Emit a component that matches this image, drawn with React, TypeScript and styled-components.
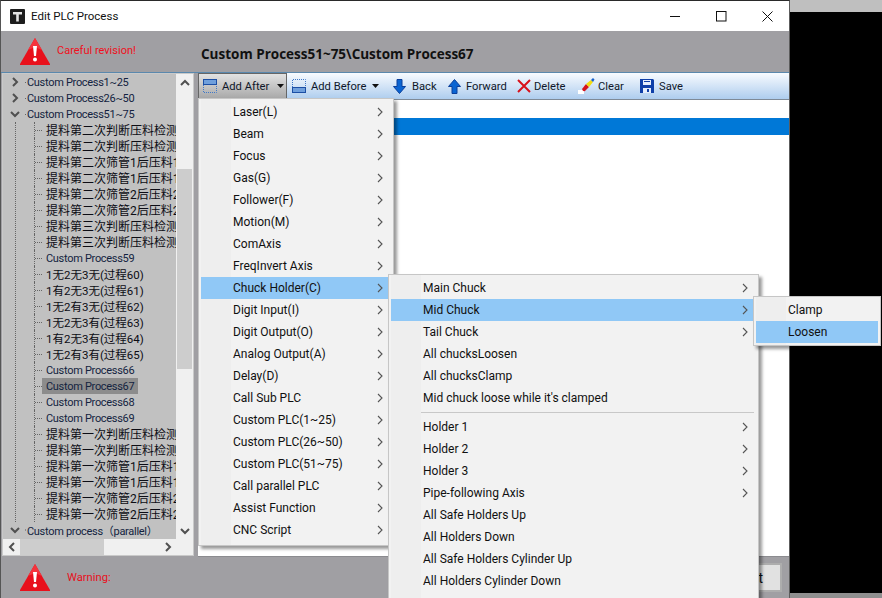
import React from "react";
import styled, { createGlobalStyle } from "styled-components";

const UI_FONT = `Roboto, "Noto Sans CJK SC", sans-serif`;

const GlobalStyle = createGlobalStyle`
  html, body {
    margin: 0;
    padding: 0;
    width: 882px;
    height: 598px;
    overflow: hidden;
    background: #000;
  }
  #root {
    width: 882px;
    height: 598px;
  }
`;

const firstGroup = ["Custom Process1~25", "Custom Process26~50"];

const childRows = [
  "提料第二次判断压料检测",
  "提料第二次判断压料检测",
  "提料第二次筛管1后压料1",
  "提料第二次筛管1后压料1",
  "提料第二次筛管2后压料2",
  "提料第二次筛管2后压料2",
  "提料第三次判断压料检测",
  "提料第三次判断压料检测",
  "Custom Process59",
  "1无2无3无(过程60)",
  "1有2无3无(过程61)",
  "1无2有3无(过程62)",
  "1无2无3有(过程63)",
  "1有2无3有(过程64)",
  "1无2有3有(过程65)",
  "Custom Process66",
  "Custom Process67",
  "Custom Process68",
  "Custom Process69",
  "提料第一次判断压料检测",
  "提料第一次判断压料检测",
  "提料第一次筛管1后压料1",
  "提料第一次筛管1后压料1",
  "提料第一次筛管2后压料2",
  "提料第一次筛管2后压料2",
];

const mainMenu = [
  "Laser(L)",
  "Beam",
  "Focus",
  "Gas(G)",
  "Follower(F)",
  "Motion(M)",
  "ComAxis",
  "FreqInvert Axis",
  "Chuck Holder(C)",
  "Digit Input(I)",
  "Digit Output(O)",
  "Analog Output(A)",
  "Delay(D)",
  "Call Sub PLC",
  "Custom PLC(1~25)",
  "Custom PLC(26~50)",
  "Custom PLC(51~75)",
  "Call parallel PLC",
  "Assist Function",
  "CNC Script",
];

const chuckTop = [
  { label: "Main Chuck", more: true },
  { label: "Mid Chuck", more: true, active: true },
  { label: "Tail Chuck", more: true },
  { label: "All chucksLoosen" },
  { label: "All chucksClamp" },
  { label: "Mid chuck loose while it's clamped" },
];

const chuckBottom = [
  { label: "Holder 1", more: true },
  { label: "Holder 2", more: true },
  { label: "Holder 3", more: true },
  { label: "Pipe-following Axis", more: true },
  { label: "All Safe Holders Up" },
  { label: "All Holders Down" },
  { label: "All Safe Holders Cylinder Up" },
  { label: "All Holders Cylinder Down" },
];

const WarnIcon = () => (
  <svg width="30" height="27" viewBox="0 0 30 27">
    <path d="M15 0 L30 26 L30 27 L0 27 L0 26 Z" fill="#e8101c" />
    <path d="M15 0 L22 12 L15 9 L8 12 Z" fill="#f5333c" />
    <path d="M13 8 h4 l-1 10 h-2 Z" fill="#fff" />
    <circle cx="15" cy="21.5" r="2" fill="#fff" />
  </svg>
);

const AppIcon = () => (
  <svg width="15" height="15" viewBox="0 0 15 15">
    <rect width="15" height="15" rx="1" fill="#1d1d1d" />
    <path d="M3 3 h9 v2.4 h-3.2 v7 h-2.6 v-7 H3 Z" fill="#e4e4e4" />
  </svg>
);

const AddAfterIcon = () => (
  <svg width="14" height="14" viewBox="0 0 14 14">
    <rect x="0.5" y="0.5" width="13" height="5" fill="#6f9fdc" stroke="#1c4fa5" />
    <path d="M0.5 6 V13.5 H13.5 V6" fill="none" stroke="#3f78c8" strokeDasharray="1 1" />
  </svg>
);

const AddBeforeIcon = () => (
  <svg width="14" height="14" viewBox="0 0 14 14">
    <path d="M0.5 8 V0.5 H13.5 V8" fill="none" stroke="#3f78c8" strokeDasharray="1 1" />
    <rect x="0.5" y="8.5" width="13" height="5" fill="#6f9fdc" stroke="#1c4fa5" />
  </svg>
);

const DownIcon = () => (
  <svg width="13" height="15" viewBox="0 0 13 15">
    <path d="M4 0.5 h5 v7 h3.5 L6.5 14.5 L0.5 7.5 H4 Z" fill="#0a64d2" stroke="#0b3f9a" />
  </svg>
);

const UpIcon = () => (
  <svg width="13" height="15" viewBox="0 0 13 15">
    <path d="M4 14.5 h5 v-7 h3.5 L6.5 0.5 L0.5 7.5 H4 Z" fill="#0a64d2" stroke="#0b3f9a" />
  </svg>
);

const DeleteIcon = () => (
  <svg width="14" height="14" viewBox="0 0 14 14">
    <path d="M1 1 L13 13 M13 1 L1 13" stroke="#d8111b" strokeWidth="2" />
  </svg>
);

const ClearIcon = () => (
  <svg width="17" height="16" viewBox="0 0 17 16">
    <path d="M0 12 h6 v4 H0 Z" fill="#fff" />
    <path d="M4 11 L8 6 L11 9 L7 13 Q5 14 4 11 Z" fill="#d4141c" />
    <path d="M8 6 L13 2 L15 4 L11 9 Z" fill="#f2dc12" />
    <path d="M13 2 L15 0 L16.5 1.5 L15 4 Z" fill="#1560cc" />
  </svg>
);

const SaveIcon = () => (
  <svg width="14" height="14" viewBox="0 0 14 14">
    <path d="M0 0 H13 L14 1 V14 H0 Z" fill="#0f3fa8" />
    <rect x="3" y="1" width="8" height="5" fill="#e6eefc" />
    <rect x="4" y="2" width="6" height="1" fill="#0f3fa8" />
    <rect x="3" y="9" width="8" height="5" fill="#e6eefc" />
    <rect x="7" y="10" width="2" height="3" fill="#0f3fa8" />
  </svg>
);

const Chevron = ({ dir }: { dir: "up" | "down" | "left" | "right" }) => {
  const paths = {
    up: "M1 7 L5 3 L9 7",
    down: "M1 3 L5 7 L9 3",
    left: "M7 1 L3 5 L7 9",
    right: "M3 1 L7 5 L3 9",
  };
  return (
    <ChevronSvg width="10" height="10" viewBox="0 0 10 10">
      <path d={paths[dir]} fill="none" stroke="#505050" strokeWidth="2" />
    </ChevronSvg>
  );
};

const MenuArrow = () => (
  <svg width="6" height="10" viewBox="0 0 6 10">
    <path d="M1 1 L5 5 L1 9" fill="none" stroke="#555" strokeWidth="1.1" />
  </svg>
);

const Caret = () => (
  <svg width="7" height="4" viewBox="0 0 7 4">
    <path d="M0 0 H7 L3.5 4 Z" fill="#111" />
  </svg>
);

// the latin-only rows in the tree run narrower than the ones with CJK in them
const rowKind = (name: string) => {
  if (name.startsWith("Custom")) return "latin";
  if (name.startsWith("提")) return "cjk";
  return "mixed";
};

const App: React.FC = () => {
  return (
    <Screen>
      <GlobalStyle />
      <Window>
        <TitleBar>
          <AppIcon />
          <TitleText>Edit PLC Process</TitleText>
          <WinControls>
            <WinButton>
              <svg width="11" height="11" viewBox="0 0 11 11">
                <path d="M0 5.5 H10" stroke="#111" />
              </svg>
            </WinButton>
            <WinButton>
              <svg width="11" height="11" viewBox="0 0 11 11">
                <rect x="0.5" y="0.5" width="9.5" height="9.5" fill="none" stroke="#111" />
              </svg>
            </WinButton>
            <WinButton>
              <svg width="11" height="11" viewBox="0 0 11 11">
                <path d="M0.5 0.5 L10.5 10.5 M10.5 0.5 L0.5 10.5" stroke="#111" />
              </svg>
            </WinButton>
          </WinControls>
        </TitleBar>

        <HeaderBand>
          <WarnIcon />
          <CarefulText>Careful revision!</CarefulText>
          <PathTitle>Custom Process51~75\Custom Process67</PathTitle>
        </HeaderBand>

        <Body>
          <Sidebar>
            <TreeRow>
              <Tree>
                {firstGroup.map((name) => (
                  <RootNode key={name}>
                    <Chevron dir="right" />
                    <RootLabel>{name}</RootLabel>
                  </RootNode>
                ))}
                <RootNode>
                  <Chevron dir="down" />
                  <RootLabel>Custom Process51~75</RootLabel>
                </RootNode>
                <ChildGroup>
                  {childRows.map((name, i) => (
                    <ChildRow key={i}>
                      <ChildLabel $selected={name === "Custom Process67"} $kind={rowKind(name)}>
                        {name}
                      </ChildLabel>
                    </ChildRow>
                  ))}
                </ChildGroup>
                <RootNode>
                  <Chevron dir="down" />
                  <RootLabel>Custom process（parallel）</RootLabel>
                </RootNode>
              </Tree>
              <VScroll>
                <ScrollCap>
                  <Chevron dir="up" />
                </ScrollCap>
                <VThumb />
                <ScrollCap>
                  <Chevron dir="down" />
                </ScrollCap>
              </VScroll>
            </TreeRow>
            <HScroll>
              <HCap>
                <Chevron dir="left" />
              </HCap>
              <HTrack>
                <HThumb />
              </HTrack>
              <HCap>
                <Chevron dir="right" />
              </HCap>
            </HScroll>
          </Sidebar>

          <MainPane>
            <Toolbar>
              <ToolButton $pressed $width={89}>
                <AddAfterIcon />
                <ToolLabel>Add After</ToolLabel>
                <CaretSlot $offset={3}>
                  <Caret />
                </CaretSlot>
              </ToolButton>
              <ToolButton $width={101}>
                <AddBeforeIcon />
                <ToolLabel>Add Before</ToolLabel>
                <CaretSlot $offset={1}>
                  <Caret />
                </CaretSlot>
              </ToolButton>
              <ToolButton $width={55} $gap={6}>
                <DownIcon />
                <ToolLabel>Back</ToolLabel>
              </ToolButton>
              <ToolButton $width={69}>
                <UpIcon />
                <ToolLabel>Forward</ToolLabel>
              </ToolButton>
              <ToolButton $width={61} $gap={3}>
                <DeleteIcon />
                <ToolLabel>Delete</ToolLabel>
              </ToolButton>
              <ToolButton $width={62} $gap={3}>
                <ClearIcon />
                <ToolLabel>Clear</ToolLabel>
              </ToolButton>
              <ToolButton>
                <SaveIcon />
                <ToolLabel>Save</ToolLabel>
              </ToolButton>
            </Toolbar>
            <ListArea>
              <SelectedLine />
            </ListArea>
          </MainPane>
        </Body>

        <Footer>
          <WarnIcon />
          <WarningText>Warning:</WarningText>
          <ExitButton>Exit</ExitButton>
        </Footer>
      </Window>

      <Desktop>
        <DesktopStrip />
        <DesktopBlack />
        <DesktopStrip />
      </Desktop>

      <MainPopup>
        {mainMenu.map((label) => (
          <MenuRow key={label} $active={label === "Chuck Holder(C)"}>
            <span>{label}</span>
            <MenuArrow />
          </MenuRow>
        ))}
      </MainPopup>

      <ChuckPopup>
        {chuckTop.map((item) => (
          <MenuRow key={item.label} $active={item.active}>
            <span>{item.label}</span>
            {item.more && <MenuArrow />}
          </MenuRow>
        ))}
        <MenuSeparator />
        {chuckBottom.map((item) => (
          <MenuRow key={item.label}>
            <span>{item.label}</span>
            {item.more && <MenuArrow />}
          </MenuRow>
        ))}
      </ChuckPopup>

      <ClampPopup>
        <MenuRow>Clamp</MenuRow>
        <MenuRow $active>Loosen</MenuRow>
      </ClampPopup>
    </Screen>
  );
};

export default App;

const Screen = styled.div`
  position: relative;
  display: flex;
  width: 882px;
  height: 598px;
  overflow: hidden;
  font-family: ${UI_FONT};
  font-size: 12px;
  color: #111;
`;

const ChevronSvg = styled.svg`
  flex-shrink: 0;
`;

const Window = styled.div`
  display: flex;
  flex-direction: column;
  width: 790px;
  height: 598px;
  box-sizing: border-box;
  border-top: 1px solid #2a2a2a;
  border-left: 1px solid #555;
  border-right: 1px solid #5c5c5c;
  background: #a09fa3;
`;

const TitleBar = styled.div`
  display: flex;
  align-items: center;
  height: 30px;
  padding-left: 9px;
  background: #fff;
`;

const TitleText = styled.span`
  margin-left: 6px;
  font-size: 11.5px;
`;

const WinControls = styled.div`
  display: flex;
  margin-left: auto;
  margin-right: -1px;
`;

const WinButton = styled.div`
  display: flex;
  align-items: center;
  justify-content: center;
  width: 46px;
  height: 30px;
`;

const HeaderBand = styled.div`
  display: flex;
  align-items: center;
  height: 41px;
  padding-left: 19px;
  background: #a09fa3;
`;

const CarefulText = styled.span`
  width: 144px;
  margin: -3px 0 0 7px;
  font-size: 11px;
  color: #f01020;
`;

const PathTitle = styled.span`
  margin-top: 5px;
  font-family: "Open Sans", sans-serif;
  font-size: 13.5px;
  font-weight: 700;
  color: #111;
`;

const Body = styled.div`
  display: flex;
  height: 484px;
  border-top: 1px solid #5a88ad;
`;

const Sidebar = styled.div`
  display: flex;
  flex-direction: column;
  width: 192px;
  height: 483px;
  margin-left: 1px;
  box-sizing: border-box;
  border: 1px solid #c9c9c9;
  background: #f0f0f0;
`;

const TreeRow = styled.div`
  display: flex;
  height: 465px;
`;

const Tree = styled.div`
  width: 173px;
  overflow: hidden;
  background: #c1c1c1;
`;

const RootNode = styled.div`
  display: flex;
  align-items: center;
  height: 16px;
  padding-left: 7px;
  white-space: nowrap;
`;

const RootLabel = styled.span`
  margin-left: 5px;
  padding-left: 2px;
  font-size: 11px;
  letter-spacing: -0.3px;
  color: #13233f;
  background: radial-gradient(circle at 0 50%, #666 0.5px, transparent 1px);
`;

const ChildGroup = styled.div`
  margin-left: 12px;
  border-left: 1px dotted #666;
`;

const ChildRow = styled.div`
  position: relative;
  height: 16px;
  margin-left: 18px;
  display: flex;
  align-items: center;
  white-space: nowrap;
  border-left: 1px dotted #666;
  padding-left: 7px;

  &::before {
    content: "";
    position: absolute;
    left: 0;
    top: 8px;
    width: 7px;
    border-top: 1px dotted #666;
  }
`;

const ChildLabel = styled.span<{ $selected?: boolean; $kind: string }>`
  height: 16px;
  line-height: 18px;
  padding: 0 4px;
  font-size: ${(p) => (p.$kind === "latin" ? "11px" : p.$kind === "mixed" ? "11.5px" : "12px")};
  letter-spacing: ${(p) => (p.$kind === "latin" ? "-0.3px" : "0")};
  color: ${(p) => (p.$kind === "latin" ? "#13233f" : "#0c0c14")};
  background: ${(p) => (p.$selected ? "#8c8c8c" : "transparent")};
`;

const VScroll = styled.div`
  display: flex;
  flex-direction: column;
  justify-content: space-between;
  width: 17px;
  background: #f0f0f0;
`;

const ScrollCap = styled.div`
  display: flex;
  align-items: center;
  justify-content: center;
  height: 17px;
`;

const VThumb = styled.div`
  width: 15px;
  height: 200px;
  margin: 77px 1px 153px;
  background: #cdcdcd;
`;

const HScroll = styled.div`
  display: flex;
  height: 16px;
  background: #f0f0f0;
`;

const HCap = styled.div`
  display: flex;
  align-items: center;
  justify-content: center;
  width: 17px;
`;

const HTrack = styled.div`
  width: 139px;
`;

const HThumb = styled.div`
  width: 84px;
  height: 16px;
  background: #cdcdcd;
`;

const MainPane = styled.div`
  display: flex;
  flex-direction: column;
  flex: 1;
  margin-left: 4px;
  min-width: 0;
`;

const Toolbar = styled.div`
  display: flex;
  align-items: center;
  height: 27px;
  flex-shrink: 0;
  box-sizing: border-box;
  border-bottom: 1px solid #7f8a96;
  background: linear-gradient(#f8fbff, #aecdee);
`;

const ToolButton = styled.div<{ $pressed?: boolean; $width?: number; $gap?: number }>`
  display: flex;
  align-items: center;
  flex-shrink: 0;
  width: ${(p) => (p.$width ? `${p.$width}px` : "auto")};
  height: 26px;
  box-sizing: border-box;
  padding-left: 4px;
  gap: ${(p) => p.$gap ?? 5}px;
  border: 1px solid ${(p) => (p.$pressed ? "#666" : "transparent")};
  background: ${(p) => (p.$pressed ? "linear-gradient(#e2e2e2, #a9a9a9)" : "transparent")};
`;

const ToolLabel = styled.span`
  font-size: 11.2px;
  color: #10182a;
`;

const CaretSlot = styled.span<{ $offset: number }>`
  display: flex;
  margin-left: ${(p) => p.$offset}px;
`;

const ListArea = styled.div`
  flex: 1;
  padding-top: 18px;
  border-bottom: 1px solid #8b8b8f;
  background: #fff;
`;

const SelectedLine = styled.div`
  height: 17px;
  background: #0078d7;
`;

const Footer = styled.div`
  display: flex;
  align-items: center;
  flex: 1;
  padding: 0 7px 0 19px;
`;

const WarningText = styled.span`
  margin-left: 17px;
  font-size: 11.2px;
  color: #e81020;
`;

const ExitButton = styled.div`
  display: flex;
  align-items: center;
  justify-content: flex-end;
  width: 100px;
  height: 29px;
  margin-left: auto;
  padding-right: 17px;
  box-sizing: border-box;
  border: 2px solid #adadad;
  background: #e1e1e1;
  font-size: 14px;
`;

const Desktop = styled.div`
  display: flex;
  flex-direction: column;
  flex: 1;
`;

const DesktopStrip = styled.div`
  height: 12px;
  flex-shrink: 0;
  background: #bfbfbf;

  &:last-child {
    height: 5px;
    background: #8f8f8f;
  }
`;

const DesktopBlack = styled.div`
  flex: 1;
  background: #000;
`;

const Popup = styled.div`
  position: absolute;
  box-sizing: border-box;
  padding: 2px;
  border: 1px solid #c6c6c6;
  box-shadow: 3px 3px 3px rgba(0, 0, 0, 0.4);
  background-color: #f2f2f2;
  background-image: linear-gradient(#eeeeee, #eeeeee);
  background-size: 30px 100%;
  background-position: 2px 0;
  background-repeat: no-repeat;
`;

const MainPopup = styled(Popup)`
  left: 198px;
  top: 98px;
  width: 196px;
  height: 448px;
`;

const ChuckPopup = styled(Popup)`
  left: 388px;
  top: 274px;
  width: 371px;
  height: 340px;
`;

const ClampPopup = styled(Popup)`
  left: 753px;
  top: 296px;
  width: 128px;
  height: 50px;
`;

const MenuRow = styled.div<{ $active?: boolean }>`
  display: flex;
  align-items: center;
  justify-content: space-between;
  height: 22px;
  padding: 0 8px 1px 32px;
  box-sizing: border-box;
  font-size: 12px;
  color: #101010;
  white-space: nowrap;
  background: ${(p) => (p.$active ? "#90c8f6" : "transparent")};
`;

const MenuSeparator = styled.div`
  height: 1px;
  margin: 3px 2px 3px 30px;
  background: #c8c8c8;
`;
